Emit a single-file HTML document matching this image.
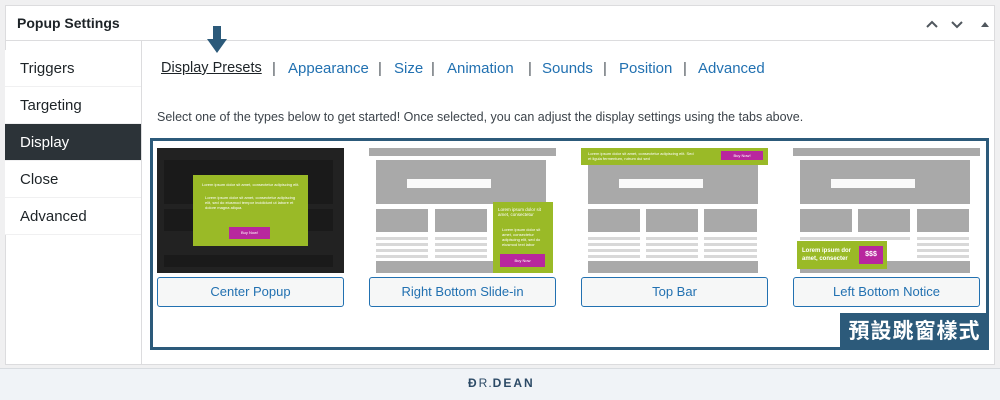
<!DOCTYPE html>
<html><head><meta charset="utf-8"><style>
*{margin:0;padding:0;box-sizing:border-box}
body{width:1000px;height:400px;background:#f0f0f1;font-family:"Liberation Sans",sans-serif;position:relative;overflow:hidden;color:#1d2327}
.a{position:absolute}
#panel{left:5px;top:5px;width:990px;height:360px;background:#fff;border:1px solid #dcdcde}
.side{font-size:15px;color:#1d2327;height:37px;line-height:37px;padding-left:15px;border-bottom:1px solid #f0f0f1;width:136px;left:5px;background:#fff}
.tab{top:60px;font-size:15px;color:#2271b1;white-space:nowrap}
.sep{top:60px;font-size:15px;color:#50575e}
.th{width:187px;height:125px;top:148px;overflow:hidden}
.btn{width:187px;height:30px;top:277px;border:1px solid #2271b1;border-radius:3px;background:#f6f7f7;color:#2271b1;font-size:13px;text-align:center;line-height:28px}
.g{background:#a9a9a9}
.l{background:#d8d8d8;height:3px}
.gr{background:#9aba27}
.mg{background:#b8279e;color:#fff;text-align:center}
.t{color:#fff;font-size:4px;line-height:5px}
</style></head><body>
<div id="panel" class="a"></div>
<div class="a" style="left:5px;top:40px;width:990px;height:1px;background:#dcdcde"></div>
<div class="a" style="left:17px;top:15px;font-size:14px;font-weight:bold;color:#1d2327">Popup Settings</div>
<svg class="a" style="left:925px;top:17px" width="70" height="14"><path d="M2 10 L7 5 L12 10" stroke="#50575e" stroke-width="2" fill="none"/><path d="M27 5 L32 10 L37 5" stroke="#50575e" stroke-width="2" fill="none"/><path d="M56 10 L60 5 L64 10Z" fill="#50575e"/></svg>
<div class="a" style="left:141px;top:41px;width:1px;height:323px;background:#dcdcde"></div>
<div class="a side" style="top:50px">Triggers</div>
<div class="a side" style="top:87px">Targeting</div>
<div class="a side" style="top:124px;background:#2c3338;color:#fff">Display</div>
<div class="a side" style="top:161px">Close</div>
<div class="a side" style="top:198px">Advanced</div>
<svg class="a" style="left:206px;top:26px" width="22" height="28"><rect x="7" y="0" width="8" height="14" fill="#2c5a7a"/><path d="M1 13 H21 L11 27Z" fill="#2c5a7a"/></svg>
<div class="a tab" style="left:161px;color:#1d2327;text-decoration:underline;font-size:14.5px">Display Presets</div>
<div class="a sep" style="left:272px">|</div>
<div class="a tab" style="left:288px">Appearance</div>
<div class="a sep" style="left:378px">|</div>
<div class="a tab" style="left:394px">Size</div>
<div class="a sep" style="left:431px">|</div>
<div class="a tab" style="left:447px">Animation</div>
<div class="a sep" style="left:528px">|</div>
<div class="a tab" style="left:542px">Sounds</div>
<div class="a sep" style="left:603px">|</div>
<div class="a tab" style="left:619px">Position</div>
<div class="a sep" style="left:683px">|</div>
<div class="a tab" style="left:698px">Advanced</div>
<div class="a" style="left:157px;top:110px;font-size:12.5px;color:#3c434a;white-space:nowrap">Select one of the types below to get started! Once selected, you can adjust the display settings using the tabs above.</div>
<div class="a" style="left:150px;top:138px;width:839px;height:212px;border:3px solid #2c5a7a"></div>

<!-- Center popup -->
<div class="a th" style="left:157px;background:#222">
 <div class="a" style="left:7px;top:12px;width:169px;height:44px;background:#1a1a1a"></div>
 <div class="a" style="left:7px;top:61px;width:169px;height:22px;background:#1a1a1a"></div>
 <div class="a" style="left:7px;top:107px;width:169px;height:12px;background:#1a1a1a"></div>
 <div class="a gr" style="left:36px;top:27px;width:115px;height:71px">
  <div class="a t" style="left:9px;top:7px;width:100px">Lorem ipsum dolor sit amet, consectetur adipiscing elit.</div>
  <div class="a t" style="left:12px;top:20px;width:92px">Lorem ipsum dolor sit amet, consectetur adipiscing elit, sed do eiusmod tempor incididunt ut labore et dolore magna aliqua.</div>
  <div class="a mg" style="left:36px;top:52px;width:41px;height:12px;font-size:4px;line-height:12px">Buy Now!</div>
 </div>
</div>
<!-- Right bottom slide-in -->
<div class="a th" style="left:369px;background:#fff">
 <div class="a g" style="left:0;top:0;width:187px;height:8px"></div>
 <div class="a g" style="left:7px;top:12px;width:170px;height:44px"><div class="a" style="left:31px;top:19px;width:84px;height:9px;background:#fafafa"></div></div>
 <div class="a g" style="left:7px;top:61px;width:52px;height:23px"></div>
 <div class="a g" style="left:66px;top:61px;width:52px;height:23px"></div>
 <div class="a l" style="left:7px;top:89px;width:52px"></div><div class="a l" style="left:7px;top:95px;width:52px"></div><div class="a l" style="left:7px;top:101px;width:52px"></div><div class="a l" style="left:7px;top:107px;width:52px"></div>
 <div class="a l" style="left:66px;top:89px;width:52px"></div><div class="a l" style="left:66px;top:95px;width:52px"></div><div class="a l" style="left:66px;top:101px;width:52px"></div><div class="a l" style="left:66px;top:107px;width:52px"></div>
 <div class="a g" style="left:7px;top:113px;width:170px;height:12px"></div>
 <div class="a gr" style="left:124px;top:54px;width:60px;height:71px">
  <div class="a t" style="left:5px;top:5px;width:50px;font-size:4.5px">Lorem ipsum dolor sit amet, consectetur</div>
  <div class="a t" style="left:9px;top:25px;width:44px">Lorem ipsum dolor sit amet, consectetur adipiscing elit, sed do eiusmod text labor</div>
  <div class="a mg" style="left:7px;top:52px;width:45px;height:13px;font-size:4px;line-height:13px">Buy Now</div>
 </div>
</div>
<!-- Top bar -->
<div class="a th" style="left:581px;background:#fff">
 <div class="a g" style="left:7px;top:16px;width:170px;height:40px"><div class="a" style="left:31px;top:15px;width:84px;height:9px;background:#fafafa"></div></div>
 <div class="a g" style="left:7px;top:61px;width:52px;height:23px"></div>
 <div class="a g" style="left:65px;top:61px;width:52px;height:23px"></div>
 <div class="a g" style="left:123px;top:61px;width:53px;height:23px"></div>
 <div class="a l" style="left:7px;top:89px;width:52px"></div><div class="a l" style="left:7px;top:95px;width:52px"></div><div class="a l" style="left:7px;top:101px;width:52px"></div><div class="a l" style="left:7px;top:107px;width:52px"></div>
 <div class="a l" style="left:65px;top:89px;width:52px"></div><div class="a l" style="left:65px;top:95px;width:52px"></div><div class="a l" style="left:65px;top:101px;width:52px"></div><div class="a l" style="left:65px;top:107px;width:52px"></div>
 <div class="a l" style="left:123px;top:89px;width:53px"></div><div class="a l" style="left:123px;top:95px;width:53px"></div><div class="a l" style="left:123px;top:101px;width:53px"></div><div class="a l" style="left:123px;top:107px;width:53px"></div>
 <div class="a g" style="left:7px;top:113px;width:170px;height:12px"></div>
 <div class="a gr" style="left:0;top:0;width:187px;height:17px">
  <div class="a t" style="left:7px;top:3px;width:110px">Lorem ipsum dolor sit amet, consectetur adipiscing elit. Sed et ligula fermentum, rutrum dui sed</div>
  <div class="a mg" style="left:140px;top:3px;width:42px;height:9px;font-size:4px;line-height:9px">Buy Now!</div>
 </div>
</div>
<!-- Left bottom notice -->
<div class="a th" style="left:793px;background:#fff">
 <div class="a g" style="left:0;top:0;width:187px;height:8px"></div>
 <div class="a g" style="left:7px;top:12px;width:170px;height:44px"><div class="a" style="left:31px;top:19px;width:84px;height:9px;background:#fafafa"></div></div>
 <div class="a g" style="left:7px;top:61px;width:52px;height:23px"></div>
 <div class="a g" style="left:65px;top:61px;width:52px;height:23px"></div>
 <div class="a g" style="left:124px;top:61px;width:52px;height:23px"></div>
 <div class="a l" style="left:124px;top:89px;width:52px"></div><div class="a l" style="left:124px;top:95px;width:52px"></div><div class="a l" style="left:124px;top:101px;width:52px"></div><div class="a l" style="left:124px;top:107px;width:52px"></div>
 <div class="a l" style="left:7px;top:89px;width:110px"></div>
 <div class="a g" style="left:7px;top:113px;width:170px;height:12px"></div>
 <div class="a gr" style="left:4px;top:93px;width:90px;height:28px">
  <div class="a" style="left:5px;top:6px;width:60px;font-size:6px;line-height:8px;color:#fff;font-weight:bold">Lorem ipsum dor amet, consecter</div>
  <div class="a mg" style="left:62px;top:5px;width:24px;height:18px;font-size:7px;line-height:18px;font-weight:bold">$$$</div>
 </div>
</div>
<div class="a btn" style="left:157px">Center Popup</div>
<div class="a btn" style="left:369px">Right Bottom Slide-in</div>
<div class="a btn" style="left:581px">Top Bar</div>
<div class="a btn" style="left:793px">Left Bottom Notice</div>
<div class="a" style="left:840px;top:313px;width:149px;height:37px;background:#2c5a7a;color:#fff;font-family:'Liberation Sans','Noto Sans CJK TC',sans-serif;font-size:21px;font-weight:bold;text-align:center;line-height:37px;letter-spacing:1px">預設跳窗樣式</div>
<div class="a" style="left:0;top:368px;width:1000px;height:32px;background:#f0f3f7;border-top:1px solid #d8dce0"></div>
<div class="a" style="left:468px;top:376px;font-size:12px;font-weight:bold;color:#2c4a66;letter-spacing:2px">Ð<span style="font-weight:normal;letter-spacing:1px">R.</span>DEAN</div>
</body></html>
